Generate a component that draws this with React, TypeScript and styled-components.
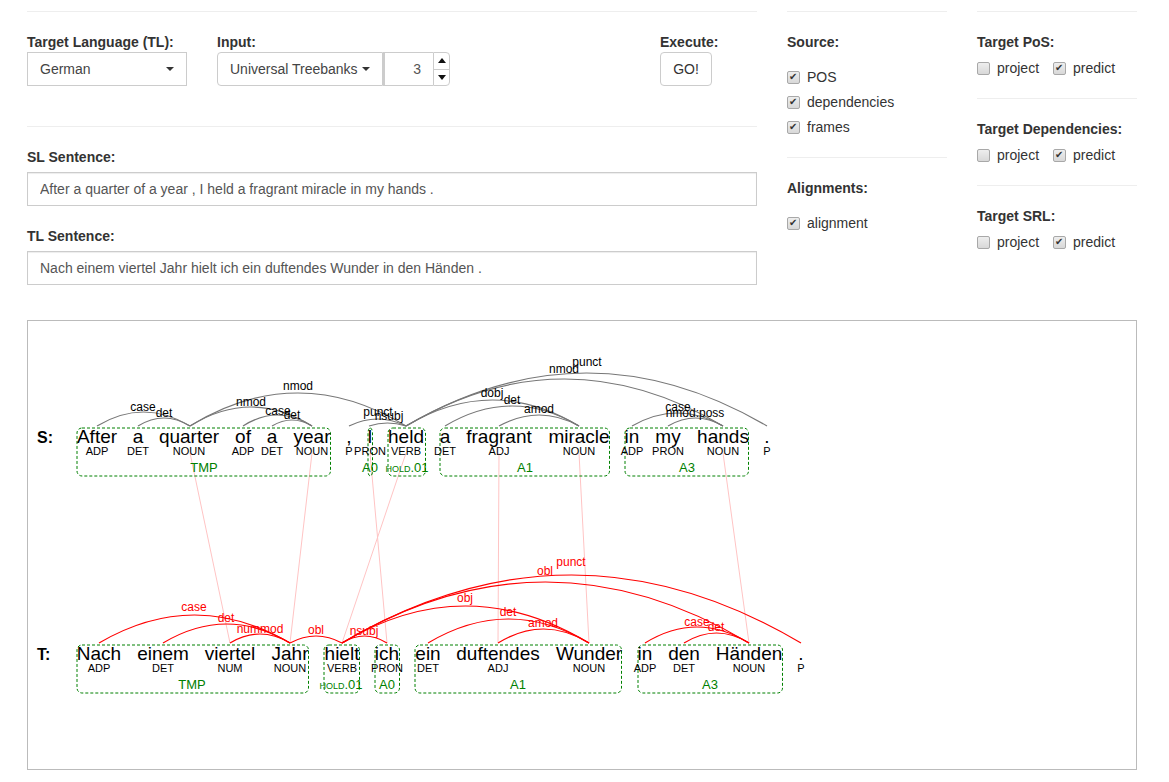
import styled, { createGlobalStyle } from 'styled-components'

type Arc = { from: number; to: number; peak: number; label: string; lx: number; ly: number }
type Word = { text: string; pos: string; x: number }
type Role = { label: string; x: number; x1: number; x2: number; small?: string }
type Row = {
  name: string
  tone: 'source' | 'target'
  wordY: number
  posY: number
  roleY: number
  boxTop: number
  boxBottom: number
  arcY: number
  words: Word[]
  arcs: Arc[]
  roles: Role[]
}

const sourceRow: Row = {
  name: 'S:',
  tone: 'source',
  wordY: 443,
  posY: 455,
  roleY: 472,
  boxTop: 428,
  boxBottom: 476,
  arcY: 426,
  words: [
    { text: 'After', pos: 'ADP', x: 97 },
    { text: 'a', pos: 'DET', x: 138 },
    { text: 'quarter', pos: 'NOUN', x: 189 },
    { text: 'of', pos: 'ADP', x: 243 },
    { text: 'a', pos: 'DET', x: 272 },
    { text: 'year', pos: 'NOUN', x: 312 },
    { text: ',', pos: 'P', x: 349 },
    { text: 'I', pos: 'PRON', x: 370 },
    { text: 'held', pos: 'VERB', x: 406 },
    { text: 'a', pos: 'DET', x: 445 },
    { text: 'fragrant', pos: 'ADJ', x: 499 },
    { text: 'miracle', pos: 'NOUN', x: 579 },
    { text: 'in', pos: 'ADP', x: 632 },
    { text: 'my', pos: 'PRON', x: 668 },
    { text: 'hands', pos: 'NOUN', x: 723 },
    { text: '.', pos: 'P', x: 767 },
  ],
  arcs: [
    { from: 97, to: 190, peak: 412, label: 'case', lx: 143, ly: 411 },
    { from: 138, to: 190, peak: 418, label: 'det', lx: 164, ly: 417 },
    { from: 190, to: 406, peak: 393, label: 'nmod', lx: 298, ly: 390 },
    { from: 190, to: 312, peak: 407, label: 'nmod', lx: 251, ly: 406 },
    { from: 243, to: 312, peak: 415, label: 'case', lx: 278, ly: 415 },
    { from: 272, to: 312, peak: 420, label: 'det', lx: 292, ly: 419 },
    { from: 349, to: 406, peak: 419, label: 'punct', lx: 378, ly: 416 },
    { from: 369, to: 406, peak: 423, label: 'nsubj', lx: 389, ly: 420 },
    { from: 406, to: 767, peak: 373, label: 'punct', lx: 587, ly: 366 },
    { from: 406, to: 723, peak: 379, label: 'nmod', lx: 564, ly: 373 },
    { from: 406, to: 579, peak: 400, label: 'dobj', lx: 492, ly: 397 },
    { from: 445, to: 579, peak: 406, label: 'det', lx: 512, ly: 404 },
    { from: 499, to: 579, peak: 415, label: 'amod', lx: 539, ly: 413 },
    { from: 632, to: 723, peak: 413, label: 'case', lx: 678, ly: 411 },
    { from: 668, to: 723, peak: 418, label: 'nmod:poss', lx: 695, ly: 417 },
  ],
  roles: [
    { label: 'TMP', x: 204, x1: 77, x2: 330.5 },
    { label: 'A0', x: 370, x1: 368, x2: 372.5 },
    { label: '.01', small: 'HOLD', x: 407, x1: 388, x2: 425.5 },
    { label: 'A1', x: 525, x1: 440, x2: 609.5 },
    { label: 'A3', x: 687, x1: 625, x2: 748.5 },
  ],
}

const targetRow: Row = {
  name: 'T:',
  tone: 'target',
  wordY: 660,
  posY: 672,
  roleY: 689,
  boxTop: 645,
  boxBottom: 693,
  arcY: 643,
  words: [
    { text: 'Nach', pos: 'ADP', x: 99 },
    { text: 'einem', pos: 'DET', x: 163 },
    { text: 'viertel', pos: 'NUM', x: 230 },
    { text: 'Jahr', pos: 'NOUN', x: 290 },
    { text: 'hielt', pos: 'VERB', x: 342 },
    { text: 'ich', pos: 'PRON', x: 387 },
    { text: 'ein', pos: 'DET', x: 428 },
    { text: 'duftendes', pos: 'ADJ', x: 498 },
    { text: 'Wunder', pos: 'NOUN', x: 589 },
    { text: 'in', pos: 'ADP', x: 645 },
    { text: 'den', pos: 'DET', x: 684 },
    { text: 'Händen', pos: 'NOUN', x: 749 },
    { text: '.', pos: 'P', x: 801 },
  ],
  arcs: [
    { from: 99, to: 290, peak: 615, label: 'case', lx: 194, ly: 611 },
    { from: 163, to: 290, peak: 624, label: 'det', lx: 226, ly: 622 },
    { from: 230, to: 290, peak: 634, label: 'nummod', lx: 260, ly: 633 },
    { from: 290, to: 342, peak: 636, label: 'obl', lx: 316, ly: 634 },
    { from: 342, to: 387, peak: 636, label: 'nsubj', lx: 364, ly: 635 },
    { from: 342, to: 801, peak: 575, label: 'punct', lx: 571, ly: 566 },
    { from: 342, to: 749, peak: 582, label: 'obl', lx: 545, ly: 575 },
    { from: 342, to: 589, peak: 606, label: 'obj', lx: 465, ly: 602 },
    { from: 428, to: 589, peak: 619, label: 'det', lx: 508, ly: 616 },
    { from: 498, to: 589, peak: 629, label: 'amod', lx: 543, ly: 627 },
    { from: 645, to: 749, peak: 627, label: 'case', lx: 697, ly: 626 },
    { from: 684, to: 749, peak: 633, label: 'det', lx: 716, ly: 631 },
  ],
  roles: [
    { label: 'TMP', x: 192, x1: 77, x2: 308.5 },
    { label: '.01', small: 'HOLD', x: 341, x1: 324, x2: 359.5 },
    { label: 'A0', x: 387, x1: 375, x2: 399.5 },
    { label: 'A1', x: 518, x1: 415, x2: 621.5 },
    { label: 'A3', x: 710, x1: 638, x2: 782.5 },
  ],
}

const alignments = [
  [190, 230],
  [312, 290],
  [370, 387],
  [406, 342],
  [499, 498],
  [579, 589],
  [723, 749],
]

const CheckItem = ({ label, checked }: { label: string; checked?: boolean }) => (
  <CheckLabel>
    <CheckBox type="checkbox" defaultChecked={checked} />
    {label}
  </CheckLabel>
)

const TargetOptions = ({ title }: { title: string }) => (
  <>
    <FieldLabel>{title}</FieldLabel>
    <InlineChecks>
      <CheckItem label="project" />
      <CheckItem label="predict" checked />
    </InlineChecks>
  </>
)

const SentenceRow = ({ row }: { row: Row }) => (
  <g>
    <RowName x={37} y={row.wordY}>
      {row.name}
    </RowName>
    {row.arcs.map(a => (
      <g key={a.label + a.from + a.to}>
        <ArcPath
          $tone={row.tone}
          d={`M ${a.from} ${row.arcY} Q ${(a.from + a.to) / 2} ${2 * a.peak - row.arcY} ${a.to} ${row.arcY}`}
        />
        <ArcLabel $tone={row.tone} x={a.lx} y={a.ly}>
          {a.label}
        </ArcLabel>
      </g>
    ))}
    {row.roles.map(r => (
      <g key={r.label + r.x}>
        <RoleBox x={r.x1} y={row.boxTop} width={r.x2 - r.x1} height={row.boxBottom - row.boxTop} rx={5} />
        <RoleLabel x={r.x} y={row.roleY}>
          {r.small && <SmallCaps>{r.small}</SmallCaps>}
          {r.label}
        </RoleLabel>
      </g>
    ))}
    {row.words.map(w => (
      <g key={w.text + w.x}>
        <WordText x={w.x} y={row.wordY}>
          {w.text}
        </WordText>
        <PosText x={w.x} y={row.posY}>
          {w.pos}
        </PosText>
      </g>
    ))}
  </g>
)

export default function App() {
  return (
    <Page>
      <GlobalStyle />
      <Controls>
        <MainColumn>
          <Rule />
          <TopRow>
            <div>
              <FieldLabel>Target Language (TL):</FieldLabel>
              <LanguageSelect>
                German
                <Caret />
              </LanguageSelect>
            </div>
            <div>
              <FieldLabel>Input:</FieldLabel>
              <InputGroup>
                <SourceButton>
                  Universal Treebanks
                  <Caret />
                </SourceButton>
                <CountBox>3</CountBox>
                <Spinner>
                  <SpinButton>
                    <SpinArrow $up />
                  </SpinButton>
                  <SpinButton>
                    <SpinArrow />
                  </SpinButton>
                </Spinner>
              </InputGroup>
            </div>
            <div>
              <FieldLabel>Execute:</FieldLabel>
              <GoButton>GO!</GoButton>
            </div>
          </TopRow>
          <Rule $gap={40} />
          <SentenceField>
            <SentenceLabel>SL Sentence:</SentenceLabel>
            <SentenceInput readOnly value="After a quarter of a year , I held a fragrant miracle in my hands ." />
          </SentenceField>
          <SentenceField>
            <SentenceLabel>TL Sentence:</SentenceLabel>
            <SentenceInput readOnly value="Nach einem viertel Jahr hielt ich ein duftendes Wunder in den Händen ." />
          </SentenceField>
        </MainColumn>

        <SideColumn>
          <Rule />
          <FieldLabel>Source:</FieldLabel>
          <CheckStack>
            <CheckItem label="POS" checked />
            <CheckItem label="dependencies" checked />
            <CheckItem label="frames" checked />
          </CheckStack>
          <Rule />
          <FieldLabel>Alignments:</FieldLabel>
          <CheckStack>
            <CheckItem label="alignment" checked />
          </CheckStack>
        </SideColumn>

        <SideColumn>
          <Rule />
          <TargetOptions title="Target PoS:" />
          <Rule />
          <TargetOptions title="Target Dependencies:" />
          <Rule />
          <TargetOptions title="Target SRL:" />
        </SideColumn>
      </Controls>

      <DiagramPanel>
        <svg width={1108} height={448} viewBox="28 321 1108 448" style={{ display: 'block' }}>
          {alignments.map(([a, b]) => (
            <AlignLine key={a} x1={a} y1={453} x2={b} y2={643} />
          ))}
          <SentenceRow row={sourceRow} />
          <SentenceRow row={targetRow} />
        </svg>
      </DiagramPanel>
    </Page>
  )
}

const GlobalStyle = createGlobalStyle`
  html, body {
    margin: 0;
    background: #fff;
  }

  body {
    font-family: "Liberation Sans", Arial, sans-serif;
    font-size: 14px;
    line-height: 20px;
    color: #333;
  }

  * {
    box-sizing: border-box;
  }
`

const Page = styled.div`
  width: 1169px;
  padding: 11px 32px 0 27px;
`

const Controls = styled.div`
  display: flex;
  gap: 30px;
`

const MainColumn = styled.div`
  width: 730px;
`

const SideColumn = styled.div`
  width: 160px;
`

const Rule = styled.div<{ $gap?: number }>`
  height: 1px;
  background: #eee;
  margin: ${p => p.$gap ?? 20}px 0 20px;

  &:first-child {
    margin-top: 0;
  }
`

const TopRow = styled.div`
  display: grid;
  grid-template-columns: 190px 443px 1fr;
`

const FieldLabel = styled.div`
  font-weight: bold;
  height: 20px;
`

const Caret = styled.span`
  display: inline-block;
  width: 0;
  height: 0;
  border-top: 4px solid #333;
  border-left: 4px solid transparent;
  border-right: 4px solid transparent;
`

const LanguageSelect = styled.div`
  width: 160px;
  height: 34px;
  padding: 0 12px;
  border: 1px solid #ccc;
  color: #444;
  display: flex;
  align-items: center;
  justify-content: space-between;
`

const InputGroup = styled.div`
  display: flex;
  height: 34px;
`

const SourceButton = styled.div`
  width: 166px;
  padding: 0 12px;
  border: 1px solid #ccc;
  border-radius: 4px 0 0 4px;
  color: #444;
  display: flex;
  align-items: center;
  justify-content: space-between;
  white-space: nowrap;
`

const CountBox = styled.div`
  width: 50px;
  padding-right: 12px;
  border: 1px solid #ccc;
  border-left-width: 2px;
  border-right: 0;
  color: #555;
  text-align: right;
  line-height: 32px;
`

const Spinner = styled.div`
  width: 17px;
  border: 1px solid #ccc;
  border-radius: 0 4px 4px 0;
  display: flex;
  flex-direction: column;
`

const SpinButton = styled.div`
  flex: 1;
  display: flex;
  align-items: center;
  justify-content: center;

  & + & {
    border-top: 1px solid #ccc;
  }
`

const SpinArrow = styled.span<{ $up?: boolean }>`
  width: 0;
  height: 0;
  border-left: 4.5px solid transparent;
  border-right: 4.5px solid transparent;
  border-top: ${p => (p.$up ? '0' : '5px solid #111')};
  border-bottom: ${p => (p.$up ? '5px solid #111' : '0')};
`

const GoButton = styled.button`
  display: block;
  width: 52px;
  height: 34px;
  padding: 0;
  background: #fff;
  border: 1px solid #ccc;
  border-radius: 4px;
  color: #333;
  font: inherit;
  cursor: pointer;
`

const SentenceField = styled.div`
  margin-bottom: 20px;

  &:last-child {
    margin-bottom: 0;
  }
`

const SentenceLabel = styled.div`
  font-weight: bold;
  margin-bottom: 5px;
`

const SentenceInput = styled.input`
  display: block;
  width: 100%;
  height: 34px;
  padding: 6px 12px;
  border: 1px solid #ccc;
  border-radius: 0;
  box-shadow: inset 0 1px 1px rgba(0, 0, 0, 0.075);
  color: #555;
  font: inherit;
  outline: none;
`

const CheckStack = styled.div`
  display: flex;
  flex-direction: column;
  gap: 5px;
  margin-top: 15px;
`

const InlineChecks = styled.div`
  display: flex;
  gap: 14px;
  margin-top: 6px;
`

const CheckLabel = styled.label`
  display: flex;
  align-items: center;
  height: 20px;
  gap: 7px;
  white-space: nowrap;
`

const CheckBox = styled.input`
  appearance: none;
  position: relative;
  width: 13px;
  height: 13px;
  margin: 0;
  flex: none;
  background: linear-gradient(#eee, #d8d8d8);
  border: 1px solid #a8a8a8;
  border-radius: 2px;

  &:checked::after {
    content: '✔';
    position: absolute;
    left: 1px;
    top: -5px;
    font: 10px "DejaVu Sans", sans-serif;
    line-height: 20px;
    color: #333;
  }
`

const DiagramPanel = styled.div`
  width: 1110px;
  height: 450px;
  margin-top: 35px;
  border: 1px solid #bbb;
`

const AlignLine = styled.line`
  stroke: #ffc4c4;
  stroke-width: 1;
`

const ArcPath = styled.path<{ $tone: 'source' | 'target' }>`
  fill: none;
  stroke: ${p => (p.$tone === 'source' ? '#777' : '#ff0000')};
  stroke-width: 1.2;
`

const ArcLabel = styled.text<{ $tone: 'source' | 'target' }>`
  fill: ${p => (p.$tone === 'source' ? '#000' : '#ff0000')};
  font-size: 12px;
  text-anchor: middle;
`

const RowName = styled.text`
  fill: #000;
  font-size: 16px;
  font-weight: bold;
`

const WordText = styled.text`
  fill: #000;
  font-size: 19px;
  text-anchor: middle;
`

const PosText = styled.text`
  fill: #000;
  font-size: 11px;
  text-anchor: middle;
`

const RoleBox = styled.rect`
  fill: none;
  stroke: #008000;
  stroke-width: 1;
  stroke-dasharray: 3 2;
`

const RoleLabel = styled.text`
  fill: #008000;
  font-size: 13px;
  text-anchor: middle;
`

const SmallCaps = styled.tspan`
  font-size: 9px;
`
